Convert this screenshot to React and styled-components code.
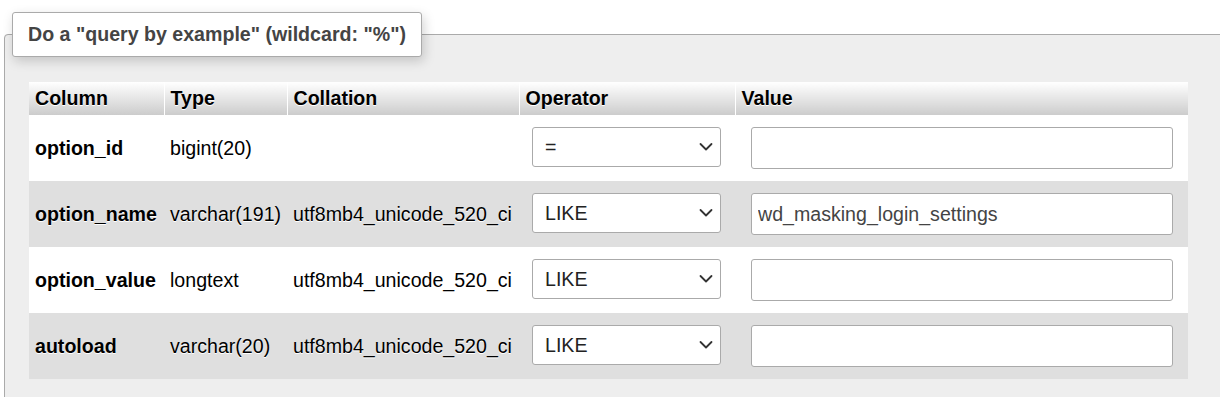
import React from "react";
import styled, { createGlobalStyle } from "styled-components";

const GlobalStyle = createGlobalStyle`
  html, body {
    margin: 0;
    padding: 0;
    background: #fff;
    overflow: hidden;
  }
  body {
    font-family: "Liberation Sans", Arial, Helvetica, sans-serif;
    color: #000;
  }
`;

const Fieldset = styled.fieldset`
  margin: 12px -40px 0 4px;
  padding: 25px 0 20px 24px;
  border: 1px solid #aaa;
  border-radius: 4px 0 0 0;
  background: #eee;
  min-width: 0;
`;

const Legend = styled.legend`
  margin-left: -17px;
  padding: 0 15px;
  height: 43px;
  line-height: 43px;
  background: #fff;
  border: 1px solid #aaa;
  border-radius: 3px;
  box-shadow: 2px 4px 12px rgba(0, 0, 0, 0.18);
  font-weight: bold;
  font-size: 19.6px;
  color: #444;
  text-shadow: 0 1px 0 #fff;
  white-space: nowrap;
`;

const Table = styled.table`
  border-collapse: collapse;
  table-layout: fixed;
  width: 1159px;
  font-size: 19.6px;
`;

const Th = styled.th`
  box-sizing: border-box;
  width: ${(p) => p.$w}px;
  height: 33px;
  padding: 0 6px;
  text-align: left;
  font-weight: bold;
  color: #000;
  text-shadow: 0 1px 0 #fff;
  background: linear-gradient(#fff, #ccc);
  border-right: 1px solid #fff;
  &:last-child {
    border-right: none;
  }
`;

const Row = styled.tr`
  height: 66px;
  background: ${(p) => (p.$odd ? "#dfdfdf" : "#fff")};
`;

const Td = styled.td`
  padding: 0 6px;
  white-space: nowrap;
  overflow: visible;
  text-shadow: 0 1px 0 #fff;
  font-weight: ${(p) => (p.$bold ? "bold" : "normal")};
`;

const SelectWrap = styled.div`
  position: relative;
  width: 189px;
  height: 40px;
  margin-left: 7px;
  margin-top: -3px;
`;

const Select = styled.select`
  appearance: none;
  -webkit-appearance: none;
  box-sizing: border-box;
  width: 100%;
  height: 100%;
  padding: 0 30px 0 12px;
  border: 1px solid #aaa;
  border-radius: 3px;
  background: #fff;
  font-family: "Liberation Sans", Arial, sans-serif;
  font-size: 19.6px;
  color: #222;
  outline: none;
`;

const Chevron = styled.svg`
  position: absolute;
  right: 8px;
  top: 50%;
  transform: translateY(-50%);
  pointer-events: none;
`;

const Input = styled.input`
  box-sizing: border-box;
  display: block;
  width: 422px;
  height: 42px;
  margin-left: 10px;
  padding: 0 6px;
  border: 1px solid #aaa;
  border-radius: 3px;
  background: #fff;
  font-family: "Liberation Sans", Arial, sans-serif;
  font-size: 19.6px;
  color: #444;
  outline: none;
`;

const rows = [
  { name: "option_id", type: "bigint(20)", coll: "", op: "=", value: "" },
  { name: "option_name", type: "varchar(191)", coll: "utf8mb4_unicode_520_ci", op: "LIKE", value: "wd_masking_login_settings" },
  { name: "option_value", type: "longtext", coll: "utf8mb4_unicode_520_ci", op: "LIKE", value: "" },
  { name: "autoload", type: "varchar(20)", coll: "utf8mb4_unicode_520_ci", op: "LIKE", value: "" },
];

const ops = ["=", "LIKE", "LIKE %...%", "NOT LIKE", "!=", ">", "<"];

function OperatorSelect({ value }) {
  return (
    <SelectWrap>
      <Select defaultValue={value}>
        {ops.map((o) => (
          <option key={o} value={o}>
            {o}
          </option>
        ))}
      </Select>
      <Chevron width="14" height="9" viewBox="0 0 14 9">
        <path d="M1.5 1.5 L7 7 L12.5 1.5" fill="none" stroke="#333" strokeWidth="1.8" strokeLinecap="round" strokeLinejoin="round" />
      </Chevron>
    </SelectWrap>
  );
}

export default function App() {
  return (
    <>
      <GlobalStyle />
      <Fieldset>
        <Legend>Do a "query by example" (wildcard: "%")</Legend>
        <Table>
          <thead>
            <tr>
              <Th $w={135}>Column</Th>
              <Th $w={123}>Type</Th>
              <Th $w={232}>Collation</Th>
              <Th $w={216}>Operator</Th>
              <Th $w={453}>Value</Th>
            </tr>
          </thead>
          <tbody>
            {rows.map((r, i) => (
              <Row key={r.name} $odd={i % 2 === 1}>
                <Td $bold>{r.name}</Td>
                <Td>{r.type}</Td>
                <Td>{r.coll}</Td>
                <Td>
                  <OperatorSelect value={r.op} />
                </Td>
                <Td>
                  <Input defaultValue={r.value} />
                </Td>
              </Row>
            ))}
          </tbody>
        </Table>
      </Fieldset>
    </>
  );
}
